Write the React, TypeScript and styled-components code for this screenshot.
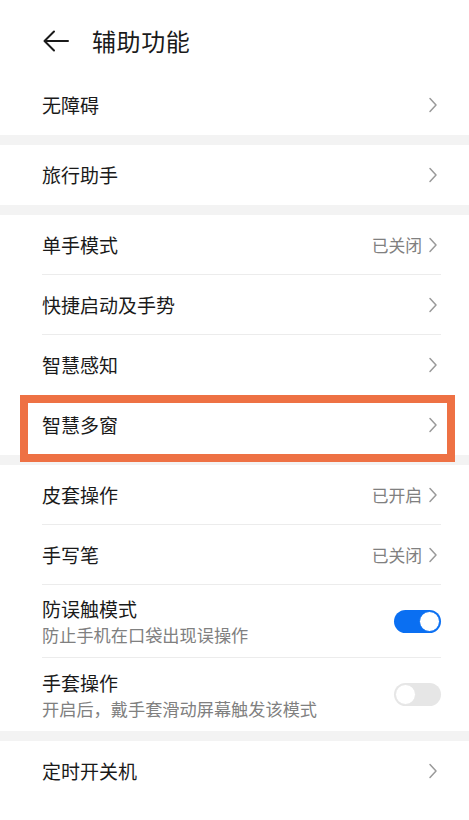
import React from 'react';
import { styled, createGlobalStyle } from 'styled-components';

const Global = createGlobalStyle`
  html, body {
    margin: 0;
    padding: 0;
    background: #ffffff;
    font-family: "Noto Sans CJK SC", "Noto Sans", sans-serif;
  }
`;

type Item = {
  title: string;
  sub?: string;
  status?: string;
  toggle?: boolean;
  highlight?: boolean;
};

const groups: Item[][] = [
  [{ title: '无障碍' }],
  [{ title: '旅行助手' }],
  [
    { title: '单手模式', status: '已关闭' },
    { title: '快捷启动及手势' },
    { title: '智慧感知' },
    { title: '智慧多窗', highlight: true },
  ],
  [
    { title: '皮套操作', status: '已开启' },
    { title: '手写笔', status: '已关闭' },
    { title: '防误触模式', sub: '防止手机在口袋出现误操作', toggle: true },
    { title: '手套操作', sub: '开启后，戴手套滑动屏幕触发该模式', toggle: false },
  ],
  [{ title: '定时开关机' }],
];

const Page = styled.div`
  width: 469px;
  height: 820px;
  overflow: hidden;
  background: #fff;
`;

const Header = styled.div`
  height: 75px;
  display: flex;
  align-items: center;
  padding: 6px 0 0 42px;
  box-sizing: border-box;
  gap: 22px;
`;

const Title = styled.div`
  font-size: 24px;
  color: #1a1a1a;
  letter-spacing: 0.6px;
`;

const Group = styled.div`
  padding: 0 28px 0 42px;
  background: #fff;
`;

const Band = styled.div`
  height: 10px;
  background: #f3f3f3;
`;

const Row = styled.div<{ $tall?: boolean; $last?: boolean }>`
  position: relative;
  height: ${p => (p.$tall ? 73 : 60)}px;
  display: flex;
  align-items: center;
  border-bottom: ${p => (p.$last ? 'none' : '1px solid #ececec')};
  box-sizing: border-box;
`;

const Texts = styled.div`
  flex: 1;
  display: flex;
  flex-direction: column;
  gap: 2px;
`;

const RowTitle = styled.div`
  font-size: 19px;
  color: #1a1a1a;
  line-height: 26px;
`;

const RowSub = styled.div`
  font-size: 17.2px;
  color: #808080;
  line-height: 22px;
`;

const Status = styled.div`
  font-size: 16.8px;
  color: #808080;
  margin-right: 6px;
`;

const Chevron = styled.svg`
  width: 10px;
  height: 16px;
  margin-right: 3px;
`;

const Switch = styled.div<{ $on: boolean }>`
  width: 47px;
  height: 23px;
  border-radius: 12px;
  background: ${p => (p.$on ? '#0a6ff2' : '#e6e6e6')};
  display: flex;
  align-items: center;
  justify-content: ${p => (p.$on ? 'flex-end' : 'flex-start')};
  padding: 0 1px;
  box-sizing: border-box;
`;

const Knob = styled.div<{ $on: boolean }>`
  width: 21px;
  height: 21px;
  border-radius: 50%;
  background: #fff;
  box-sizing: border-box;
  border: 1.5px solid ${p => (p.$on ? '#0a6ff2' : '#e6e6e6')};
`;

const Highlight = styled.div`
  position: absolute;
  top: 0;
  bottom: -7px;
  left: -22px;
  right: -14px;
  border: 8px solid #ee7144;
  pointer-events: none;
`;

const ChevronIcon = () => (
  <Chevron viewBox="0 0 10 16">
    <path d="M2 1.5 L8 8 L2 14.5" fill="none" stroke="#9a9a9a" strokeWidth="1.5" strokeLinecap="round" strokeLinejoin="round" />
  </Chevron>
);

const BackArrow = () => (
  <svg width="28" height="24" viewBox="0 0 28 24">
    <path d="M26 12 H3 M12 2.5 L2.5 12 L12 21.5" fill="none" stroke="#1a1a1a" strokeWidth="2" strokeLinecap="round" strokeLinejoin="round" />
  </svg>
);

export default function App() {
  return (
    <Page>
      <Global />
      <Header>
        <BackArrow />
        <Title>辅助功能</Title>
      </Header>
      {groups.map((g, gi) => (
        <React.Fragment key={gi}>
          {gi > 0 && <Band />}
          <Group>
            {g.map((it, i) => (
              <Row key={it.title} $tall={!!it.sub} $last={i === g.length - 1 || g[i + 1]?.highlight || it.highlight}>
                <Texts>
                  <RowTitle>{it.title}</RowTitle>
                  {it.sub && <RowSub>{it.sub}</RowSub>}
                </Texts>
                {it.status && <Status>{it.status}</Status>}
                {it.toggle === undefined ? (
                  <ChevronIcon />
                ) : (
                  <Switch $on={it.toggle}>
                    <Knob $on={it.toggle} />
                  </Switch>
                )}
                {it.highlight && <Highlight />}
              </Row>
            ))}
          </Group>
        </React.Fragment>
      ))}
    </Page>
  );
}
